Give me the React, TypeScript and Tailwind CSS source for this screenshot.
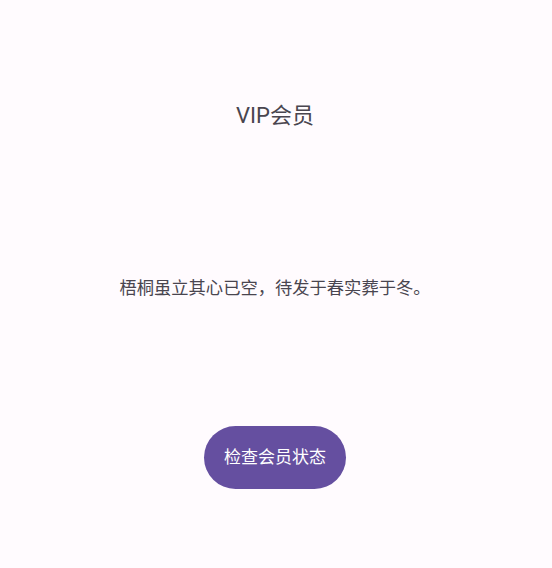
export default function App() {
  const font = { fontFamily: '"Roboto", "Noto Sans CJK SC", sans-serif' };
  return (
    <div className="w-[552px] h-[568px] bg-[#fffbfe]" style={font}>
      <div className="w-[550px] flex flex-col items-center">
        <div className="h-[116px] shrink-0" />
        <div className="h-0 flex items-center">
          <span className="text-[22px] leading-[28px] text-[#49454f] whitespace-nowrap">VIP会员</span>
        </div>
        <div className="h-[172px] shrink-0" />
        <div className="h-0 flex items-center">
          <span className="text-[17.3px] leading-[24px] text-[#49454f] whitespace-nowrap">梧桐虽立其心已空，待发于春实葬于冬。</span>
        </div>
        <div className="h-[138px] shrink-0" />
        <button className="w-[142px] h-[63px] rounded-full bg-[#654fa0] text-white text-[17px] flex items-center justify-center">
          检查会员状态
        </button>
      </div>
    </div>
  );
}
